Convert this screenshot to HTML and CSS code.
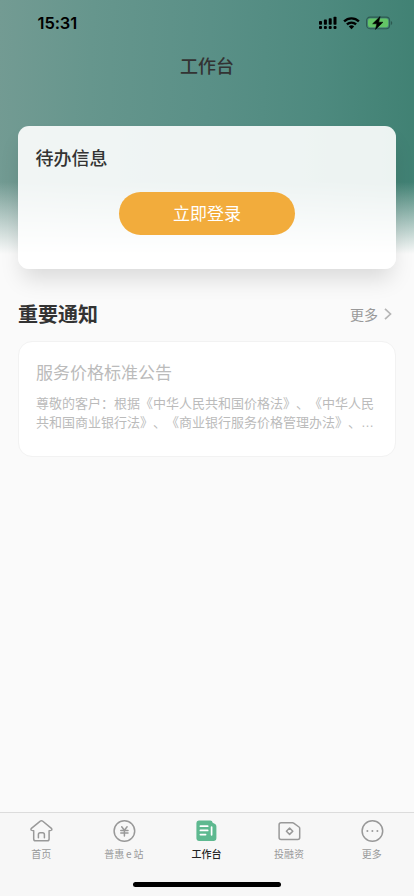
FILE: index.html
```html
<!DOCTYPE html>
<html lang="zh-CN">
<head>
<meta charset="utf-8">
<meta name="viewport" content="width=device-width, initial-scale=1">
<title>工作台</title>
<link rel="stylesheet" href="styles.css">
</head>
<body>
<div class="screen">
  <div class="hero">
    <header class="status">
      <span class="time">15:31</span>
      <div class="status-icons">
        <svg width="18" height="14" viewBox="0 0 18 14"><g fill="#000"><rect x="0" y="5" width="3" height="3.7" rx=".8"/><rect x="4.9" y="3.6" width="3" height="5.1" rx=".8"/><rect x="9.7" y="2.2" width="3" height="6.5" rx=".8"/><rect x="14.5" y=".8" width="3" height="7.9" rx=".8"/><rect x="0" y="10" width="3" height="3" rx="1"/><rect x="4.9" y="10" width="3" height="3" rx="1"/><rect x="9.7" y="10" width="3" height="3" rx="1"/><rect x="14.5" y="10" width="3" height="3" rx="1"/></g></svg>
        <svg class="wifi" width="17" height="14" viewBox="0 0 17 14"><g fill="none" stroke="#000" stroke-width="2.3"><path d="M1.1 5.4a10.5 10.5 0 0 1 14.8 0"/><path d="M3.9 8.4a6.6 6.6 0 0 1 9.2 0"/></g><path d="M5.8 10.5a4 4 0 0 1 5.4 0L8.5 13.2z" fill="#000"/></svg>
        <svg class="battery" width="27" height="14" viewBox="0 0 27 14"><rect x=".6" y="1.1" width="23" height="11.6" rx="3.4" fill="none" stroke="#2d5a51" stroke-width="1.1"/><rect x="2" y="2.5" width="20.2" height="8.8" rx="2.2" fill="#63c466"/><path d="M24.9 5v4c1.8-.7 1.8-3.3 0-4z" fill="#2d5a51"/><path d="M14.1.6 6.6 7.8h4.2L9.5 13.4 17 6.2h-4.3z" fill="#000" stroke="#000" stroke-width=".5"/></svg>
      </div>
    </header>
    <h1 class="title">工作台</h1>
  </div>
  <main>
    <section class="todo">
      <h2>待办信息</h2>
      <button class="login">立即登录</button>
    </section>
    <div class="section-head">
      <h2>重要通知</h2>
      <a class="more">更多<svg width="8" height="14" viewBox="0 0 8 14"><path d="M1 1.8 6.5 7 1 12.2" fill="none" stroke="#b5b5b5" stroke-width="1.7"/></svg></a>
    </div>
    <article class="notice">
      <h3>服务价格标准公告</h3>
      <p>尊敬的客户：根据《中华人民共和国价格法》、《中华人民<br>共和国商业银行法》、《商业银行服务价格管理办法》、<span class="ellipsis">…</span></p>
    </article>
  </main>
  <nav class="tabs">
    <a class="tab"><svg viewBox="0 0 24 24"><path d="M10.6 2.3Q12 1.1 13.4 2.3L22 9.4q.8.8.3 1.6-.4.7-2.6.7V20q0 1.8-1.8 1.8H6.1q-1.8 0-1.8-1.8v-8.3q-2.2 0-2.6-.7-.5-.8.3-1.6z"/><path d="M9 18.8v-3.2q0-1.9 1.8-1.9h2.4q1.8 0 1.8 1.9v3.2"/></svg><span>首页</span></a>
    <a class="tab"><svg viewBox="0 0 24 24"><circle cx="12" cy="12" r="10.3"/><path d="m9.3 7.8 2.7 3.5 2.7-3.5M8.4 11.5h7.2M8.4 14.1h7.2M12 11.3v5.6"/></svg><span>普惠<span class="e">e</span>站</span></a>
    <a class="tab active"><svg viewBox="0 0 24 24"><path class="solid" d="M4.4 1.5h11.4q2 0 2.5 2.2l2.4 1.4q1.3.8 1.3 2.4V19q0 3-3 3H4.4Q2 22 2 19.6V4q0-2.5 2.4-2.5z"/><path class="lines" d="M6 7.2h7.3M6 11.4h7.3M6 15.6h5.2M17.2 8v7.8"/></svg><span>工作台</span></a>
    <a class="tab"><svg viewBox="0 0 24 24"><path d="M3.7 3.8h11.4q.8 0 1.5.5l5 3.7q.7.5.7 1.4v9.2q0 2-2 2H3.7q-2 0-2-2V5.8q0-2 2-2z"/><path d="m12.2 9 3.2 3.2-3.2 3.2L9 12.2z"/></svg><span>投融资</span></a>
    <a class="tab"><svg viewBox="0 0 24 24"><circle cx="12" cy="12" r="10.3"/><g class="dots"><circle cx="7" cy="12" r="1"/><circle cx="12" cy="12" r="1"/><circle cx="17" cy="12" r="1"/></g></svg><span>更多</span></a>
    <div class="home-bar"></div>
  </nav>
</div>
</body>
</html>
```
FILE: styles.css
```css
* { box-sizing: border-box; }
body {
  margin: 0;
  background: #fafafa;
  font-family: "Noto Sans CJK SC", sans-serif;
  color: #333;
  text-spacing-trim: space-all;
}
h1, h2, h3, p { margin: 0; font-weight: 500; }
.screen {
  height: 896px;
  display: flex;
  flex-direction: column;
  overflow: hidden;
  background:
    linear-gradient(to bottom, rgba(250,250,250,0) 182px, rgba(250,250,250,1) 254px) 0 0 / 100% 256px no-repeat,
    linear-gradient(92deg, #739b93 0%, #66968d 22%, #5a9087 50%, #4e8a7f 76%, #408173 100%) 0 0 / 100% 255px no-repeat,
    #fafafa;
}
.hero { height: 126px; }
.status {
  height: 46px;
  display: flex;
  justify-content: space-between;
  align-items: center;
  padding: 0 21px 0 37.5px;
}
.time { font: 600 16.5px/20px Inter, sans-serif; color: #000; letter-spacing: -.1px; }
.status-icons { display: flex; align-items: center; }
.wifi { margin-left: 6.5px; }
.battery { margin-left: 6px; }
.title { text-align: center; font-size: 18px; line-height: 26px; margin-top: 6px; }
main { flex: 1; padding: 0 18px; }
.todo {
  height: 143px;
  padding: 18px 17.5px;
  border-radius: 11px;
  background: rgba(255,255,255,.9);
  box-shadow: 0 14px 22px -4px rgba(0,0,0,.13);
  display: flex;
  flex-direction: column;
}
.todo h2 { font-size: 18px; line-height: 26px; }
.login {
  width: 176px;
  height: 43px;
  margin: 22px auto 0;
  padding: 0 0 1px;
  border: 0;
  border-radius: 22px;
  background: #f2ac3c;
  color: #fff;
  font: 400 17px/42px "Noto Sans CJK SC", sans-serif;
}
.section-head {
  height: 72px;
  padding-top: 18px;
  display: flex;
  justify-content: space-between;
  align-items: center;
}
.section-head h2 { font-size: 20px; line-height: 30px; font-weight: 600; }
.more { display: flex; align-items: center; gap: 6px; padding-right: 4px; font-size: 14px; color: #999; }
.notice {
  height: 116px;
  padding: 17px 17px;
  border: 1px solid #f2f2f2;
  border-radius: 14px;
  background: #fff;
  color: #bbb;
}
.notice h3 { font-size: 17px; line-height: 25px; font-weight: 400; }
.notice p { margin-top: 9px; font-size: 13px; line-height: 19px; font-weight: 400; white-space: nowrap; }
.ellipsis { font-family: "Liberation Sans", sans-serif; line-height: 1; }
.tabs {
  height: 84px;
  padding-right: 1px;
  border-top: 1px solid #dcdcdc;
  background: #f7f7f7;
  display: grid;
  grid-template-columns: repeat(5, 1fr);
  grid-template-rows: 69px 5px;
}
.tab { display: flex; flex-direction: column; align-items: center; padding-top: 6px; color: #999; font-size: 10px; line-height: 15px; }
.tab svg { width: 24px; height: 24px; margin-bottom: 3px; fill: none; stroke: #999; stroke-width: 1.5; stroke-linecap: round; stroke-linejoin: round; transform: translateX(.4px); }
.tab .dots { fill: #999; stroke: none; }
.tab .solid { fill: #5eb990; stroke: none; }
.tab .lines { stroke: #fff; stroke-width: 1.7; }
.e { margin: 0 1.8px; }
.active { color: #222; font-weight: 500; }
.home-bar { grid-column: 1 / -1; justify-self: center; width: 148px; height: 5px; margin-left: 1px; border-radius: 3px; background: #000; }
```
